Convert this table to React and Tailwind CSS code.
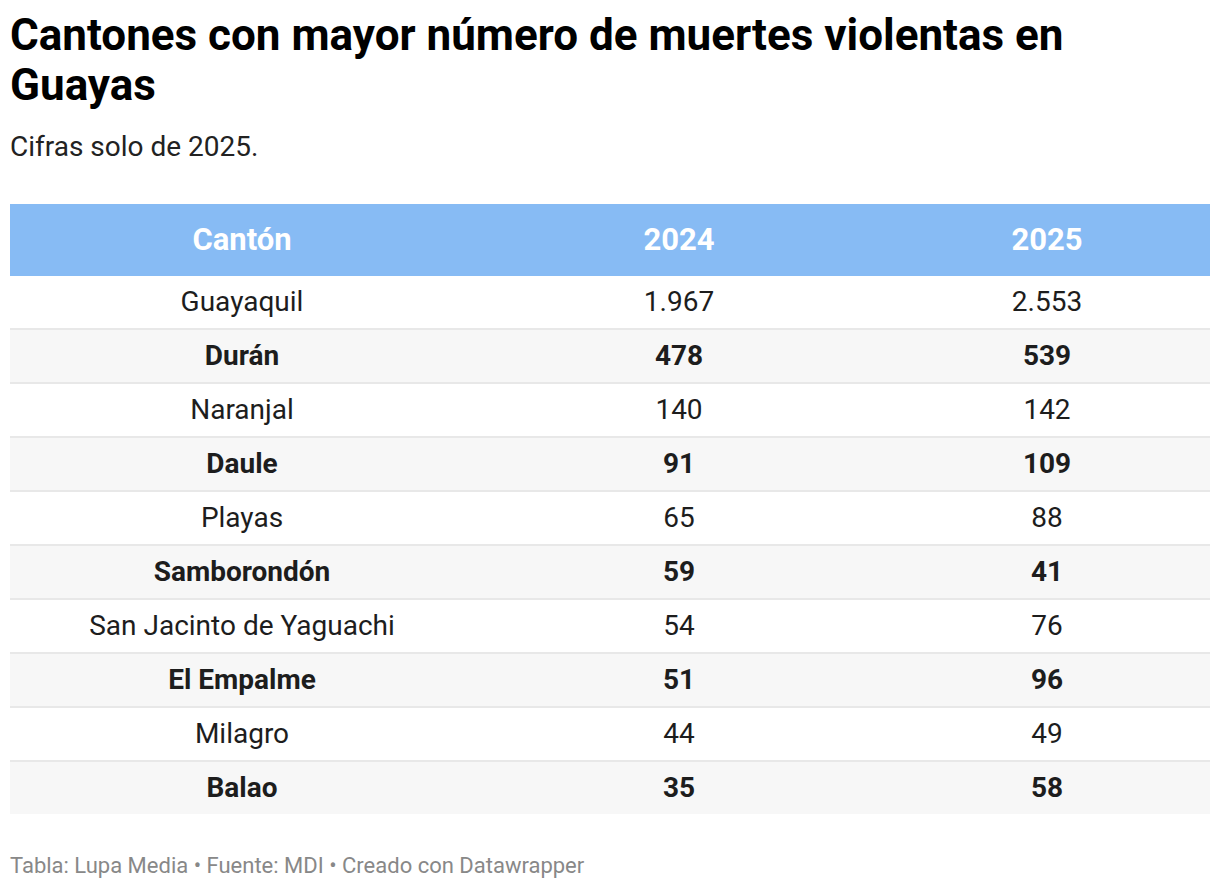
import React from "react";

const ROWS = [
  ["Guayaquil", "1.967", "2.553"],
  ["Durán", "478", "539"],
  ["Naranjal", "140", "142"],
  ["Daule", "91", "109"],
  ["Playas", "65", "88"],
  ["Samborondón", "59", "41"],
  ["San Jacinto de Yaguachi", "54", "76"],
  ["El Empalme", "51", "96"],
  ["Milagro", "44", "49"],
  ["Balao", "35", "58"],
];

export default function App() {
  return (
    <div className="min-h-screen bg-white px-[10px] pt-[10px] font-['Roboto',sans-serif] text-[#1d1d1d]">
      <h1 className="text-[44px] font-bold leading-[50px] text-black">
        Cantones con mayor número de muertes violentas en Guayas
      </h1>
      <p className="mt-[20px] text-[28px] leading-[34px] text-[#222]">Cifras solo de 2025.</p>

      <div className="mt-[40px]">
        <div className="grid h-[72px] grid-cols-[464px_410px_1fr] items-center bg-[#87bbf4] text-[31px] font-bold text-white">
          <div className="text-center">Cantón</div>
          <div className="text-center">2024</div>
          <div className="text-center">2025</div>
        </div>
        {ROWS.map((r, i) => (
          <div
            key={r[0]}
            className={`grid grid-cols-[464px_410px_1fr] items-center text-[28px] ${
              i > 0 ? "h-[54px] border-t-2 border-[#e8e8e8]" : "h-[52px]"
            } ${i % 2 === 1 ? "bg-[#f7f7f7] font-bold" : "bg-white"}`}
          >
            <div className="text-center">{r[0]}</div>
            <div className="text-center">{r[1]}</div>
            <div className="text-center">{r[2]}</div>
          </div>
        ))}
      </div>

      <p className="mt-[39px] text-[22px] leading-[26px] text-[#888]">
        Tabla: Lupa Media • Fuente: MDI • Creado con Datawrapper
      </p>
    </div>
  );
}
